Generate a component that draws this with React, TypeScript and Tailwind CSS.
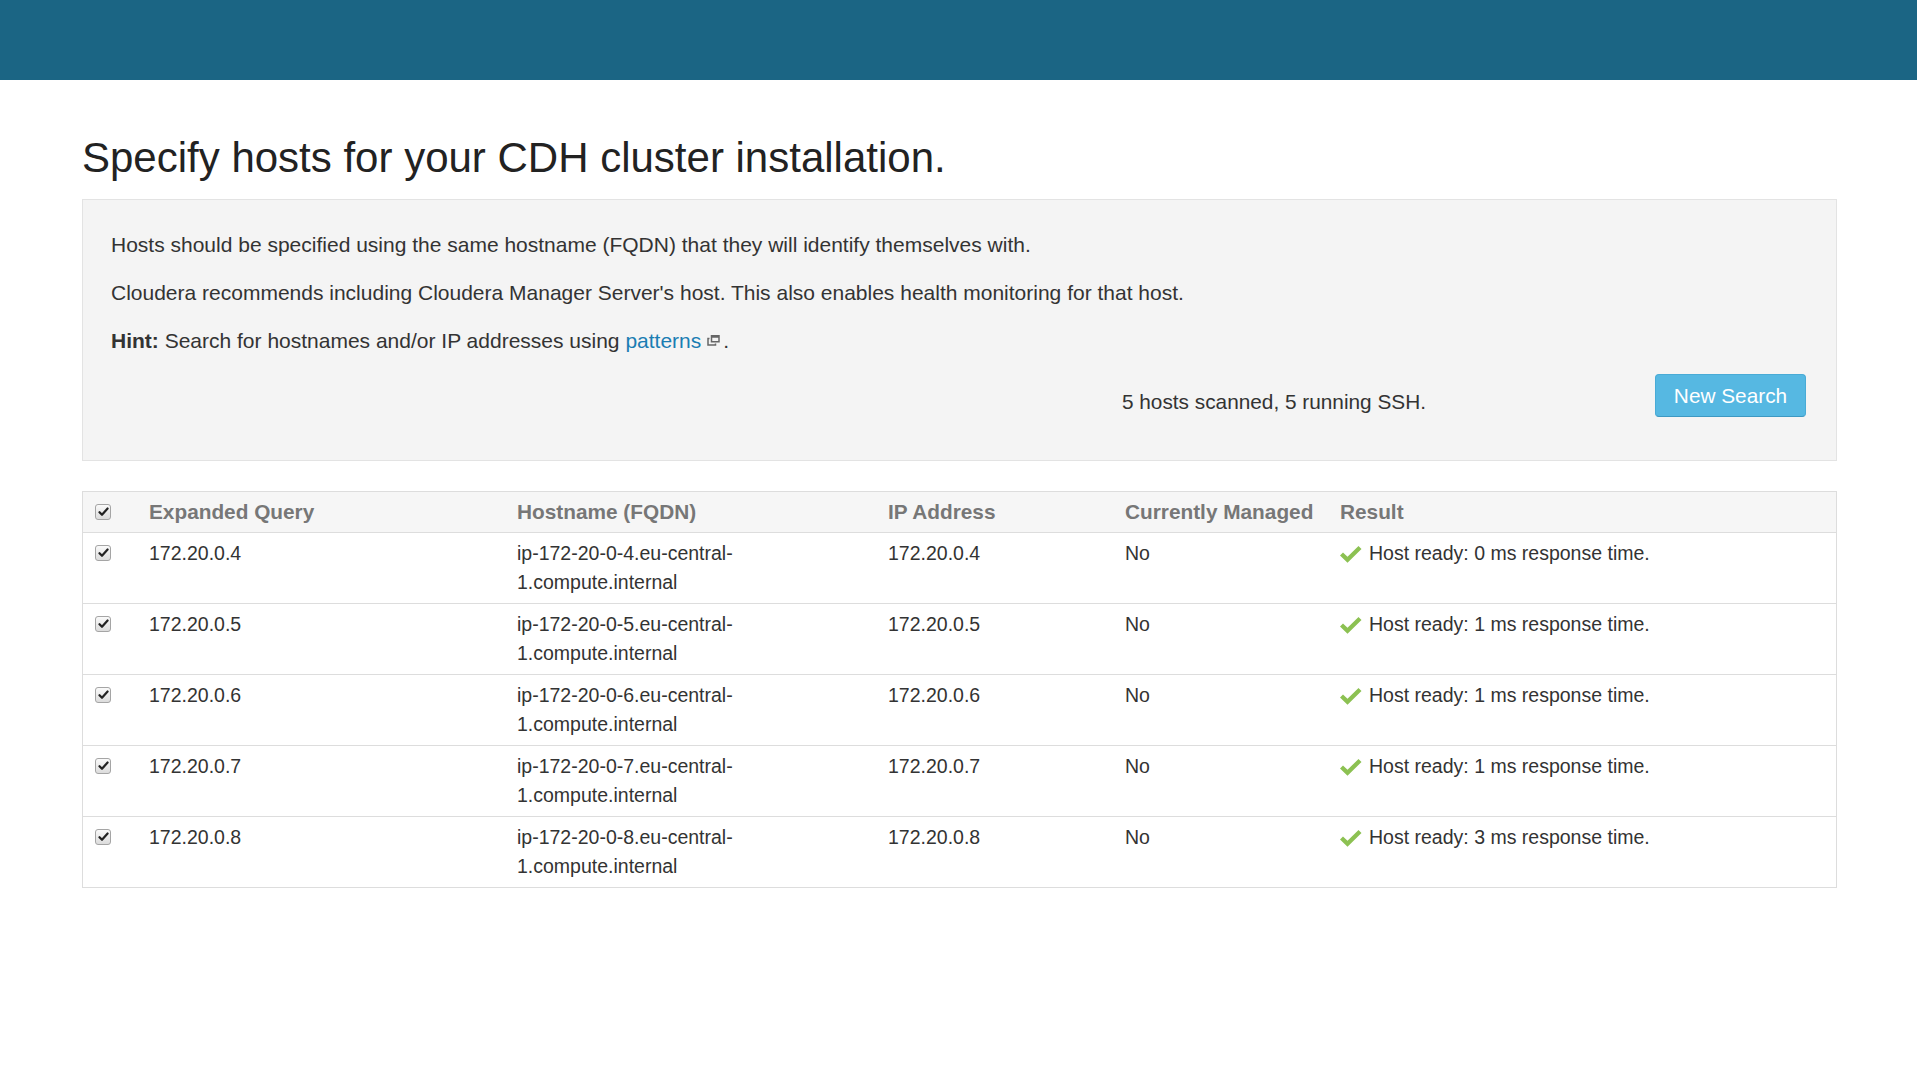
import React from "react";

const rows = [
  { q: "172.20.0.4", h: "ip-172-20-0-4.eu-central-", ms: 0 },
  { q: "172.20.0.5", h: "ip-172-20-0-5.eu-central-", ms: 1 },
  { q: "172.20.0.6", h: "ip-172-20-0-6.eu-central-", ms: 1 },
  { q: "172.20.0.7", h: "ip-172-20-0-7.eu-central-", ms: 1 },
  { q: "172.20.0.8", h: "ip-172-20-0-8.eu-central-", ms: 3 },
];

function Checkbox() {
  return (
    <div className="w-[16px] h-[16px] rounded-[3px] border border-[#a5a5a5] bg-gradient-to-b from-[#fafafa] to-[#dcdcdc] flex items-center justify-center">
      <svg width="11" height="10" viewBox="0 0 11 10">
        <path d="M1.5 5.2 L4 7.8 L9.6 1.5" fill="none" stroke="#222" strokeWidth="2.2" strokeLinecap="round" strokeLinejoin="round" />
      </svg>
    </div>
  );
}

function OkIcon() {
  return (
    <svg width="22" height="17" viewBox="0 0 22 17" className="shrink-0">
      <polygon points="0,9.5 3,6.5 7.5,10.8 18.5,0 21.5,3 7.5,16.8" fill="#8cc152" />
    </svg>
  );
}

function ExtIcon() {
  return (
    <svg width="13" height="11" viewBox="0 0 13 11" className="inline-block ml-[6px] mr-[3px] align-[2px]">
      <rect x="4.5" y="0.75" width="7.5" height="6" fill="none" stroke="#666" strokeWidth="1.5" />
      <rect x="4.5" y="0.75" width="7.5" height="2" fill="#666" />
      <path d="M2.5 3.5 H1 V10 H8.5 V8.5" fill="none" stroke="#666" strokeWidth="1.5" />
    </svg>
  );
}

export default function App() {
  const font = { fontFamily: '"Liberation Sans", Arial, Helvetica, sans-serif' };
  const cell = "pl-[12px] pt-[6px] pb-[6px] text-[19.5px]";
  return (
    <div className="min-h-screen bg-white text-[#333] text-[21px] leading-[29px]" style={font}>
      <div className="h-[80px] bg-[#1b6584]" />
      <div className="pl-[82px] pr-[80px]">
        <h1 className="mt-[55px] text-[42px] leading-[46px] text-[#222] font-normal">
          Specify hosts for your CDH cluster installation.
        </h1>
        <div className="mt-[18px] border border-[#e3e3e3] bg-[#f4f4f4] pt-[30px] pb-[30px] pl-[28px] pr-[30px]">
          <p className="mb-[19px]">
            Hosts should be specified using the same hostname (FQDN) that they will identify themselves with.
          </p>
          <p className="mb-[19px]">
            Cloudera recommends including Cloudera Manager Server's host. This also enables health monitoring for that host.
          </p>
          <p className="mb-[19px]">
            <b>Hint:</b> Search for hostnames and/or IP addresses using{" "}
            <span className="text-[#1a7db3]">patterns</span>
            <ExtIcon />.
          </p>
          <div className="flex justify-end items-start h-[56px]">
            <span className="pt-[13px] text-[20.8px]">5 hosts scanned, 5 running SSH.</span>
            <button className="ml-[229px] w-[151px] h-[43px] rounded-[4px] bg-[#56b8e2] border border-[#49abd6] border-b-[#3d98c2] text-white text-[20.8px] leading-[29px]">
              New Search
            </button>
          </div>
        </div>

        <div className="mt-[30px] border border-[#dddddd]">
          <div className="grid grid-cols-[54px_368px_371px_237px_215px_1fr] bg-[#f6f6f6] border-b border-[#dddddd] font-bold text-[#777] text-[20.8px]">
            <div className="pl-[12px] pt-[5px] pb-[6px] flex items-center"><Checkbox /></div>
            <div className="pl-[12px] pt-[5px] pb-[6px]">Expanded Query</div>
            <div className="pl-[12px] pt-[5px] pb-[6px]">Hostname (FQDN)</div>
            <div className="pl-[12px] pt-[5px] pb-[6px]">IP Address</div>
            <div className="pl-[12px] pt-[5px] pb-[6px]">Currently Managed</div>
            <div className="pl-[12px] pt-[5px] pb-[6px]">Result</div>
          </div>
          {rows.map((r, i) => (
            <div
              key={r.q}
              className={`grid grid-cols-[54px_368px_371px_237px_215px_1fr] ${i > 0 ? "border-t border-[#dddddd]" : ""}`}
            >
              <div className="pl-[12px] pt-[12px] pb-[6px]"><Checkbox /></div>
              <div className={cell}>{r.q}</div>
              <div className={cell}>
                <div>{r.h}</div>
                <div>1.compute.internal</div>
              </div>
              <div className={cell}>{r.q}</div>
              <div className={cell}>No</div>
              <div className={`${cell} flex items-start`}>
                <span className="mt-[7px] mr-[7px]"><OkIcon /></span>
                <span>Host ready: {r.ms} ms response time.</span>
              </div>
            </div>
          ))}
        </div>
      </div>
    </div>
  );
}
